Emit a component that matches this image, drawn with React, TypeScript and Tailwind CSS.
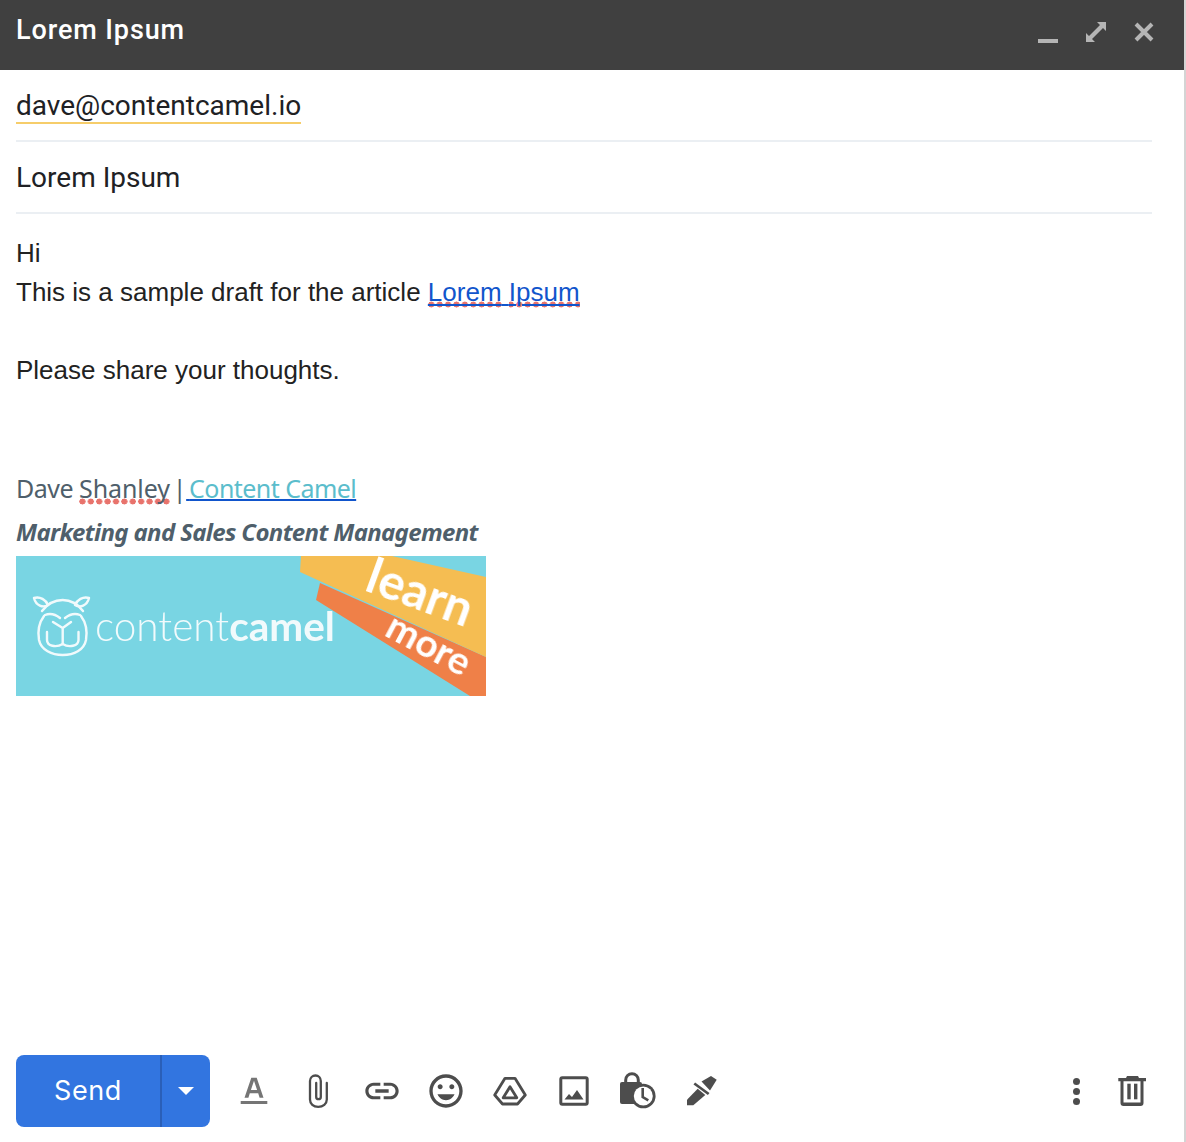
const iconBox = "w-10 h-10";

const FormatIcon = () => (
  <svg viewBox="0 0 40 40" className={iconBox} fill="#757575">
    <path fillRule="evenodd" d="M17.300 6.700h5.400l6.800 20h-3.900l-1.400-4.400h-8.400l-1.400 4.400h-3.900zM16.900 19h6.200L20 9.800z" />
    <rect x="6.700" y="30" width="26.600" height="3" />
  </svg>
);

const ClipIcon = () => (
  <svg viewBox="0 0 40 40" className={iconBox} fill="none" stroke="#4d4d4d" strokeWidth="2.300">
    <path d="M28.800 12v16.500c0 4.400-3.800 7.400-8.600 7.400s-8.200-3-8.200-7.400V10c0-3.400 2.500-5.500 5.500-5.500s5.300 2.100 5.300 5.500v16c0 1.300-.8 2.200-2.300 2.200s-2.300-.9-2.300-2.200V12" strokeLinecap="round" />
  </svg>
);

const LinkIcon = () => (
  <svg viewBox="0 0 24 24" className={iconBox} fill="#4d4d4d">
    <path d="M3.900 12c0-1.710 1.390-3.100 3.100-3.100h4V7H7c-2.760 0-5 2.240-5 5s2.240 5 5 5h4v-1.900H7c-1.710 0-3.100-1.390-3.100-3.100zM8 13h8v-2H8v2zm9-6h-4v1.900h4c1.710 0 3.100 1.390 3.100 3.100s-1.390 3.100-3.100 3.100h-4V17h4c2.760 0 5-2.240 5-5s-2.240-5-5-5z" />
  </svg>
);

const SmileIcon = () => (
  <svg viewBox="0 0 24 24" className={iconBox} fill="#4d4d4d">
    <path d="M11.990 2C6.470 2 2 6.480 2 12s4.470 10 9.990 10C17.520 22 22 17.520 22 12S17.520 2 11.990 2zM12 20c-4.420 0-8-3.580-8-8s3.580-8 8-8 8 3.580 8 8-3.580 8-8 8zm3.500-9c.830 0 1.500-.670 1.500-1.500S16.330 8 15.500 8 14 8.670 14 9.500s.670 1.500 1.500 1.500zm-7 0c.830 0 1.500-.670 1.500-1.500S9.330 8 8.500 8 7 8.670 7 9.500 7.670 11 8.500 11zm3.500 6.500c2.330 0 4.310-1.460 5.110-3.500H6.890c.800 2.040 2.780 3.500 5.110 3.500z" />
  </svg>
);

const DriveIcon = () => (
  <svg viewBox="0 0 40 40" className={iconBox} fill="none" stroke="#4d4d4d" strokeWidth="2.800" strokeLinejoin="round">
    <path d="M15 7.300h10L35.300 24l-7.800 9h-15L4.700 24z" />
    <path d="M20 15.700l-6.800 11.100h13.600z" />
  </svg>
);

const ImageIcon = () => (
  <svg viewBox="0 0 40 40" className={iconBox}>
    <rect x="6.800" y="6.800" width="26.400" height="26.400" rx="1.500" fill="none" stroke="#4d4d4d" strokeWidth="3" />
    <path d="M10.500 28.500l4.500-5.500 3 3 5-7 6.500 9.500z" fill="#4d4d4d" />
  </svg>
);

const ScheduleIcon = () => (
  <svg viewBox="0 0 40 40" className={iconBox}>
    <path d="M7.700 12V9a6.300 6.300 0 0 1 12.600 0v3" fill="none" stroke="#4d4d4d" strokeWidth="3" />
    <rect x="2" y="11" width="22" height="22" rx="2" fill="#4d4d4d" />
    <circle cx="25.300" cy="25" r="12.300" fill="#4d4d4d" />
    <circle cx="25.300" cy="25" r="9.500" fill="#fff" />
    <path d="M24.700 17v9l5.600 3.400" fill="none" stroke="#4d4d4d" strokeWidth="2.600" />
  </svg>
);

const PenIcon = () => (
  <svg viewBox="0 0 40 40" className={iconBox} fill="#4d4d4d">
    <path d="M5 34.300v-5.600l10.700-11 7.600 6.300-12 10.300z" />
    <path d="M11.500 13.500l1.600-2 14.400 10.500-1.600 2z" />
    <path d="M19.500 10.500L29 5l5.700 3.700-6.700 10.800z" />
  </svg>
);

const TrashIcon = () => (
  <svg viewBox="0 0 40 40" className={iconBox} fill="#4d4d4d">
    <path d="M15 5h11l1 2h7v3.200H6.300V7H14z" />
    <path d="M8.500 9h3v22.500h17V9h3v23a3 3 0 0 1-3 3h-17a3 3 0 0 1-3-3z" />
    <rect x="15.300" y="12.700" width="3.400" height="15.600" />
    <rect x="22" y="12.700" width="3.400" height="15.600" />
  </svg>
);

const tools = [FormatIcon, ClipIcon, LinkIcon, SmileIcon, DriveIcon, ImageIcon, ScheduleIcon, PenIcon];

const spellDots = "bg-[radial-gradient(circle,#e8736c_2.800px,transparent_3.200px)] bg-[length:8.400px_7px] bg-repeat-x bg-bottom";

const Banner = () => (
  <svg viewBox="0 0 470 140" className="w-[470px] h-[140px] block overflow-visible bg-[#79d5e3]">
    <polygon points="304,27 300,44 454,140 470,140 470,101" fill="#ef8048" />
    <polygon points="285,0 284,16 470,101 470,21 376,0" fill="#f5bd52" />
    <g className="blur-[0.5px]" fill="none" stroke="#fff" strokeWidth="2.400" strokeLinecap="round" strokeLinejoin="round" opacity=".9">
      <path d="M28 60C22 68 22 78 23 84 25 94 36 99 46.700 99 58 99 68 94 70 84 71 78 71 68 65 60" />
      <path d="M26 55C32 47 39 44 46.700 44 54 44 61 47 67 55" />
      <path d="M18 42c6-2 12 2 14 7-5 3-12 1-14-7zM73 42c-6-2-12 2-14 7 5 3 12 1 14-7z" />
      <path d="M29 59c5-2 10-1 15 3M64 59c-5-2-10-1-15 3" />
      <path d="M37 66l9.700 6L55 66M46.700 72v16" />
      <path d="M31 76v8c0 6 9 8 15.700 4 6.300 4 15.800 2 15.800-4v-8" />
    </g>
    <text className="blur-[0.4px]" x="79" y="85" fill="#fff" opacity=".9" fontFamily="Lato, sans-serif" fontSize="40.500">
      <tspan fontWeight="300">content</tspan>
      <tspan fontWeight="700">camel</tspan>
    </text>
    <text className="blur-[0.4px]" x="347" y="34" transform="rotate(20 347 34)" fill="#fff" fontFamily="Lato, sans-serif" fontWeight="700" fontSize="49">learn</text>
    <text className="blur-[0.4px]" x="367" y="79" transform="rotate(28 367 79)" fill="#fff" fontFamily="Lato, sans-serif" fontWeight="700" fontSize="39">more</text>
  </svg>
);

export default function App() {
  return (
    <div className="w-[1186px] h-[1142px] bg-white overflow-hidden">
      <div className="w-[1186px] h-full flex flex-col border-r-2 border-[#d4d4d4]">
        <div className="h-[70px] shrink-0 bg-[#404040] flex items-center justify-between pl-4 pr-7 pb-[10px]">
          <span className="font-['Roboto',sans-serif] font-medium text-[27px] tracking-[0.900px] text-white">Lorem Ipsum</span>
          <div className="flex gap-6 items-center">
            <svg viewBox="0 0 24 24" className="w-6 h-6 relative top-[2px]" fill="#b5b5b5"><rect x="2" y="19" width="20" height="4" /></svg>
            <svg viewBox="0 0 24 24" className="w-6 h-6 relative top-[2px]" fill="#b5b5b5">
              <path d="M2 22V13l3 3 11-11-3-3h9v9l-3-3L8 19l3 3z" />
            </svg>
            <svg viewBox="0 0 24 24" className="w-6 h-6 relative top-[2px]" stroke="#b5b5b5" strokeWidth="4" fill="none">
              <path d="M4 4l16 16M20 4L4 20" />
            </svg>
          </div>
        </div>

        <div className="mx-4 w-[1136px] h-[72px] shrink-0 border-b-2 border-[#ebeff3] flex items-start pt-[19px]">
          <span className="font-['Roboto',sans-serif] text-[28px] leading-[33px] text-[#202124] border-b-2 border-[#f6cd6a]">dave@contentcamel.io</span>
        </div>
        <div className="mx-4 w-[1136px] h-[72px] shrink-0 border-b-2 border-[#ebeff3] flex items-center pt-[2px]">
          <span className="font-['Roboto',sans-serif] text-[28px] text-[#202124]">Lorem Ipsum</span>
        </div>

        <div className="flex-1 pl-4 pt-5 font-['Liberation_Sans',Arial,sans-serif] text-[26px] leading-[39px] text-[#222222]">
          <div>Hi</div>
          <div>
            This is a sample draft for the article{" "}
            <a className="text-[#1155cc] underline decoration-2 underline-offset-[3px]">
              <span className={`${spellDots} pb-[1px]`}>Lorem</span> <span className={`${spellDots} pb-[1px]`}>Ipsum</span>
            </a>
          </div>
          <div className="h-[39px]" />
          <div>Please share your thoughts.</div>

          <div className="mt-[76px] font-['Noto_Sans',sans-serif] text-[25px] leading-[44px] text-[#4f5f6b] tracking-[-0.500px]">
            Dave <span className={`${spellDots} tracking-[-0.100px]`}>Shanley</span>
            <span className="[word-spacing:-3px]">{" "}</span>|
            <a className="text-[#5bbdcc] tracking-[-0.550px] underline decoration-2 decoration-[#1155cc] underline-offset-[1px]">
              <span className="[word-spacing:-3px]">{" "}</span>Content Camel
            </a>
          </div>
          <div className="mb-[2px] font-['Noto_Sans',sans-serif] text-[24px] leading-[44px] font-bold italic text-[#4f5f6b] tracking-[-0.650px]">
            Marketing and Sales Content Management
          </div>
          <Banner />
        </div>

        <div className="h-[87px] shrink-0 flex items-start pl-4 pr-8">
          <div className="w-[194px] h-[72px] rounded-lg bg-[#3275e0] flex text-white">
            <div className="w-[146px] border-r-2 border-[#2a5fb8] flex items-center justify-center font-['Inter',sans-serif] font-normal text-[27px] tracking-[0.600px]">Send</div>
            <div className="flex-1 flex items-center justify-center">
              <div className="w-0 h-0 border-x-[8px] border-x-transparent border-t-[8px] border-t-white" />
            </div>
          </div>
          <div className="flex ml-3 h-[72px] items-center">
            {tools.map((Icon, i) => (
              <div key={i} className="w-16 flex justify-center"><Icon /></div>
            ))}
          </div>
          <div className="ml-auto flex h-[72px] items-center gap-4">
            <div className="w-10 flex flex-col items-center gap-[3px]">
              <div className="w-[7px] h-[7px] rounded-full bg-[#4d4d4d]" />
              <div className="w-[7px] h-[7px] rounded-full bg-[#4d4d4d]" />
              <div className="w-[7px] h-[7px] rounded-full bg-[#4d4d4d]" />
            </div>
            <TrashIcon />
          </div>
        </div>
      </div>
    </div>
  );
}
